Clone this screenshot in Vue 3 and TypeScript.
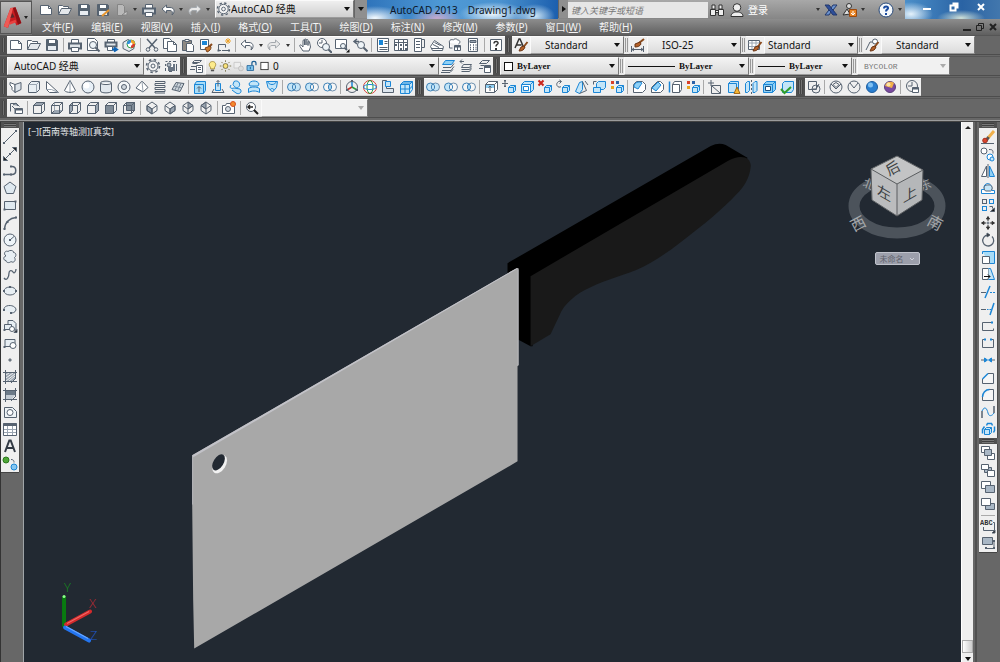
<script setup lang="ts">
import { h, ref } from 'vue'

const D = '#566270'
const B = '#1b86d6'
const L = '#c3e5f8'
const G = '#9aa5b1'

const p = (d: string, fill = 'none', stroke = '', w = 0): string =>
  `<path d="${d}" fill="${fill}"${stroke ? ` stroke="${stroke}"` : ''}${w ? ` stroke-width="${w}"` : ''}/>`
const c = (x: number, y: number, r: number, fill = 'none', stroke = ''): string =>
  `<circle cx="${x}" cy="${y}" r="${r}" fill="${fill}"${stroke ? ` stroke="${stroke}"` : ''}/>`
const dot = (x: number, y: number, fill = D): string =>
  `<rect x="${x - 1}" y="${y - 1}" width="2" height="2" fill="${fill}" stroke="none"/>`

const wire = p('M2.5 5.5h8v8h-8zM2.5 5.5l3-3h8v8l-3 3M10.5 5.5l3-3')
const iso = p('M8 2l5 3.5v5L8 14l-5-3.5v-5zM3 5.5L8 9l5-3.5M8 9v5')
const mini = p('M7.500 8.500l2-2h5v5l-2 2h-5z', L, B) + p('M7.500 8.500h5v5M12.500 8.500l2-2', 'none', B)
const brush = p('M14.500 5l-4 5', 'none', '#8a4a1c', 2) + p('M11 9l-3 1-2 4c3 0 5-1 6-4z', '#b5622a', '#6b3413')
const sheets = p('M5.500 6.500h8l-2 3h-8zM3.500 11.500h8l2-3M3.500 13.500h8l2-3', 'none')
const lens = (x: number, y: number): string => c(x, y, 3.5, '#eef4f8') + p(`M${x + 2.5} ${y + 2.5}l4 4`, 'none', D, 2)
const rings = (a: string, b: string, m: string): string =>
  c(5.5, 8, 4, a, '#3d82b8') + c(10.5, 8, 4, b, '#6d8fae') + p('M8 4.800a4 4 0 0 1 0 6.400a4 4 0 0 1 0-6.400z', m, '#3d82b8')
const colours =
  '<g stroke="none"><rect x="2" y="2" width="3" height="3" fill="#d8402a"/><rect x="7" y="2" width="3" height="3" fill="#2b62a8"/><rect x="2" y="7" width="3" height="3" fill="#e9a51f"/></g>'

const icons: Record<string, string> = {
  new: p('M2.500 3.500h8l3 3v6h-11z', '#fff') + p('M10.500 3.500v3h3'),
  open: p('M1.500 12.500v-9h4l1 1h5v2', '#fff') + p('M1.500 12.500l3-6h10l-3 6z', '#e4e8ec'),
  save: p('M2.500 2.500h10l1 1v10h-11z', '#566370') + p('M5 3h6v3H5z', '#fff', 'none') + p('M4 9h8v4H4z', '#e8edf2', 'none'),
  saveas: p('M2.500 2.500h10l1 1v10h-11z', '#566370') + p('M5 3h6v3H5z', '#fff', 'none') + p('M4 9h8v4H4z', '#e8edf2', 'none') + p('M7 14l7-6', 'none', '#e8962e', 2),
  sheet: p('M3.500 2.500h5l2 2v9h-7z', '#b9b9b9', '#858585') + p('M8 13l5-4v4z', '#ccc', '#858585'),
  print: p('M4.500 6V2.500h7V6', '#fff') + p('M2 6.500h12v5H2z', '#dfe4e8', D, 2) + p('M4.500 10.500h7v4h-7z', '#fff'),
  preview: p('M2.500 1.500h7l3 3v9h-10z', '#fff') + lens(8, 8),
  publish: p('M4.500 5V2.500h7V5', '#fff') + p('M2.500 5.500h11v4h-11z', '#dfe4e8', D, 2) + p('M4.500 9.500h5v4h-5z', '#fff') + p('M9 12.500h4M11 10.500l3 2-3 2', 'none', '#0d62b4', 2),
  globe: p('M2 5.500l5-3 6 3v6l-5 3-6-3z', '#e6eaee') + c(10, 7, 4, '#fff', '#2fa04b') + p('M10 7V3a4 4 0 0 1 4 4z', '#f0a429', 'none') + p('M10 7h4a4 4 0 0 1-4 4z', '#d63b2f', 'none') + p('M10 7H6a4 4 0 0 1 4-4z', '#2f8fe0', 'none') + c(10, 7, 1.500, '#fff', 'none'),
  cut: p('M3 2l8 9M13 2L5 11', 'none', D, 1.500) + c(4, 12.500, 1.800) + c(12, 12.500, 1.800),
  copy: p('M1.500 1.500h6l2 2v8h-8z', '#fff') + p('M5.500 4.500h6l3 3v7h-9z', '#fff') + p('M11.500 4.500v3h3'),
  paste: p('M2.500 3.500h9v10h-9z', '#8f8a84') + p('M5 2.500h4v2H5z', '#fff') + p('M6.500 6.500h5l2 2v6h-7z', '#fff'),
  match: p('M2.500 2.500h8v10h-8z', '#fff') + p('M4 4h5v4H4z', B, 'none') + p('M14 7l-3 3', 'none', '#8a4a1c', 2) + p('M12 9l-5 2 2 4c3-1 4-3 4-5z', '#c87930', '#7c441c'),
  block: p('M5 13.500H2.500v-6h7v3M6 13.500h7') + dot(2.500, 13.500) + dot(13, 13.500) + p('M12 1v6M9 4h6M10 2l4 4M14 2l-4 4', 'none', '#eca32d'),
  undo: p('M6.500 3L2 7l4.500 4V8.500H10c2 0 3 1.500 2 4.500 3-2 3-7.500-2-7.500H6.500z', '#fff'),
  redo: p('M9.500 3L14 7l-4.500 4V8.500H6c-2 0-3 1.500-2 4.500-3-2-3-7.500 2-7.500h3.500z', '#e8e8e8', '#a3a8ad'),
  pan: p('M5 14L2 9.500c-1-2 1-2 2-.5l1 1V4c0-1.500 1.500-1.500 1.500 0V8 3c0-1.500 1.500-1.500 1.500 0v5-4.500c0-1.500 2-1.500 2 0V8.500 5c0-1 1.500-1 1.500 0l1 5-1.500 4z', '#fff'),
  zoomrt: c(6, 6, 4.500, '#fff') + p('M6 3v3H3') + lens(10, 10),
  zoomwin: p('M1.500 2.500h11v9h-11z', '#fff') + c(9, 9, 2.500, '#eef4f8') + p('M11 11l2 2', 'none', D, 2) + p('M12 15.500h3.500V12z', '#111', 'none'),
  zoomprev: p('M7 4.500H3M5 2L2 4.500 5 7', 'none', D, 1.500) + lens(9, 8),
  props: p('M2.500 1.500h11v13h-11z', '#fff') + p('M4 3h4v5H4z', B, 'none') + p('M9.500 4.500h3M9.500 6.500h3M4.500 10.500h8M4.500 12.500h8'),
  dcenter: p('M1.500 2.500h13v11h-13z', '#fff') + p('M5.500 2.500v11M10.500 2.500v11M1.500 5.500h13') + p('M2 7h2v2H2zM7 7h2v2H7zM12 7h2v2h-2zM7 11h2v2H7zM12 11h2v2h-2z', D, 'none'),
  palette: p('M3.500 1.500h7v13h-7z', '#fff') + p('M10.500 2.500h3v8h-3M5 4.500h4M5 7.500h4M5 10.500h4'),
  sheetset: p('M1.500 9.500l4-6 9 6-1 4h-10z', '#fff') + p('M3 11.500h11M4 7.500l6 3M5.500 5.500l6 3'),
  markup: p('M2.500 6c-1-3 2-4 4-3 1-2 4-1 4 0 3 0 3 3 1 4', '#fff') + p('M2.500 6v5h3M7.500 8.500h6v5h-6z', '#fff') + p('M8 9.500h5', 'none', D, 2) + p('M10.500 9v4'),
  calc: p('M3.500 1.500h9v13h-9z', '#fff') + p('M5 3.500h6v2H5z', G) + p('M5 8h1M8 8h1M10.500 8h1M5 10.500h1M8 10.500h1M10.500 10.500h1M5 12.500h1M8 12.500h1M10.500 12.500h1', 'none', D, 1.500),
  help: p('M2.500 2.500h11v11h-11z', '#fff') + p('M6 6.500c0-3 4.500-2.500 4 0-.5 1-2 1-2 3', 'none', '#333', 1.500) + dot(8, 12, '#333'),
  textstyle: p('M2 11L6 2h1l3.500 8M3.500 8h5', 'none', '#333', 1.500) + brush,
  dimstyle: p('M1.500 9v6M13.500 9v6M2 12.500h11M4 11l-2 1.500L4 14M11 11l2 1.500-2 1.500') + p('M14 2L9 6', 'none', '#8a4a1c', 2) + p('M10 5L5 7v3c3 0 5-1 6-3z', '#b5622a', '#6b3413'),
  tablestyle: p('M1.500 3.500h11v9h-11z', '#fff') + p('M1.500 6h11M5 4v8M9 4v8M2 9.500h10', 'none', G) + brush,
  mleader: p('M2 13l4-8h3') + c(11, 4.500, 2.500, '#fff') + brush,
  gear: `<circle cx="8" cy="8" r="6.500" fill="none" stroke-width="1.500" stroke-dasharray="2.500 2.600"/>` + c(8, 8, 5, '#f4f4f4') + c(8, 8, 2),
  wssave: p('M2.500 3.500h2M6 3.500h2M10 3.500h3M2.500 6v2M2.500 10v3M6 13.500h3M13.500 6v7') + p('M5 6h7v7H5z', '#697583', 'none') + p('M7 6h3v3H7z', '#fff', 'none') + c(6, 7, 2, '#aab3bc'),
  layers: p('M6.500 2.500h7l-2 2h-7zM4.500 5.500h5M3 8.500h5M2 11.500h5') + p('M8.500 7.500h6v7h-6z', '#fff') + p('M10 9.500h3M10 11.500h3'),
  bulb: p('M5.500 9.500c-3-3-1-7 2.500-7s5.500 4 2.500 7v2h-5z', '#fdeb8c', '#9c8430') + p('M6 13.500h4', 'none', '#555', 2),
  sun: c(8, 8, 3, '#fbe37a', '#6a6238') + p('M8 1v2M8 13v2M1 8h2M13 8h2M3 3l1.500 1.500M11.500 11.500L13 13M13 3l-1.500 1.500M3 13l1.500-1.500', 'none', '#6a6238'),
  freeze: p('M2.500 3.500h8v7h-8z', '#eee', '#c4c4c4') + c(11, 11, 3, '#ddd', '#bbb'),
  lock: p('M2.500 7.500h8v6h-8z', '#7cc3ee', '#1d5f94') + p('M8.500 7V4.500c0-3 5-3 5 0V7', 'none', '#1d5f94', 1.500) + p('M6.500 9v3', 'none', '#134a78'),
  white: '<rect x="3.500" y="3.500" width="9" height="9" fill="#fff" stroke="#222"/>',
  laycur: p('M5.500 2.500h9l-3 4h-9z', '#8fd0f5', B) + p('M3 9.500h8l3-4M2 12.500h9l3-4M1 14.500h9l3-3'),
  layprev: p('M6 3.500H2M4 1.500l-2 2 2 2') + sheets,
  laystate: p('M6.500 2.500h7l-3 3h-7zM4.500 7.500h4M3 10.500h4') + p('M8.500 7.500h6v7h-6z', '#fff') + p('M8 9h7', 'none', D, 2),
  polysolid: p('M2 3.500l5 2v8l-3-3V8L2 6z', '#fff') + p('M7 5.500l6-2v7l-6 3z', '#dde3e9'),
  box: p('M2.500 5.500l3-3h8v8l-3 3h-8z', '#eaf0f4') + p('M2.500 5.500h8v8M10.500 5.500l3-3', 'none', G),
  wedge: p('M2.500 2.500v8l3 3h9z', '#fff') + p('M2.500 10.500h5l7 3', 'none', G),
  cone: p('M8 1.500l5.500 10c-2 2.500-9 2.500-11 0z', '#fff') + p('M8 2v11', 'none', G),
  sphere: c(8, 8, 6, '#e8f0f7') + c(6.500, 6.500, 3, '#fff', 'none'),
  cylinder: p('M2.500 4c0-2.500 11-2.500 11 0v8c0 2.500-11 2.500-11 0z', '#e2e8ee') + p('M2.500 4c0 2 11 2 11 0', '#fff'),
  torus: c(8, 8, 6, '#f4f7f9') + c(8, 8, 2.500, '#cfd7de'),
  pyramid: p('M8 2l6 6.500-5 4.500-7-4z', '#fff') + p('M8 2l1 11', 'none', G),
  helix: p('M3 2.500h10v2H3v2h10v2H3v2h10v2H3v1.500h10'),
  planar: p('M6 3.500l8 1-4 8-8-2z', '#cdd5dc') + p('M4 7l8 2M8 4l-3 7M11 4.500L7.500 12', 'none', '#7a8794'),
  extrude: p('M2.500 5.500l2-3h9v9l-2 3h-9z', '#a7dcf8', B) + p('M2.500 5.500h9v9', 'none', B) + p('M7 13V8M5 9.500L7 7.500l2 2'),
  presspull: p('M5.500 4.500h5v7h-5z', L, B) + p('M2 13.500h12M4 10l-2 3.500M12 10l2 3.500M8 1.500v6M6.500 3L8 1.500 9.500 3'),
  sweep: p('M6 2.500c4-2 7 2 5 5s-5 0-6-2z', L, B) + p('M3 6c-2 3 0 4 3 3l6 1c3 3-1 6-4 4L4 11', L, B),
  revolve: p('M3 5c1-4 9-4 10 0l-1 2H4z', L, B) + p('M2.500 9.500c3-2 8-2 11 0v4c-3-2-8-2-11 0z', L, B),
  loft: p('M2.500 2.500h11l-1 6-4 4.500L4 8.500z', L, B) + p('M4 2.500c0 4 8 4 8 0M6 11c1-2 3-2 4 0', 'none', B),
  union: rings(L, L, L),
  subtract: rings(L, '#f6f6f6', '#f6f6f6'),
  intersect: rings('#f6f6f6', '#f6f6f6', '#9bd5f5'),
  move3: p('M8 8V2', 'none', B, 1.500) + p('M8 8l-5 3', 'none', '#c3312a', 1.500) + p('M8 8l5 3', 'none', '#2b9b3d', 1.500) + c(8, 8, 5.500) + dot(8, 2) + dot(3, 11) + dot(13, 11),
  rotate3: c(8, 8, 6.500, '#fff', '#d23b30') + `<ellipse cx="8" cy="8" rx="3" ry="6.500" stroke="#2b9b3d"/><ellipse cx="8" cy="8" rx="6.500" ry="2.500" stroke="${B}"/>`,
  align3: p('M2.500 1.500v12h11v-4h-7v-8z', '#dde6ee') + p('M5.500 2.500h5v5h-5z', L, B),
  array3: p('M2.500 5.500l3-3h9v8l-3 4h-9z', L, B) + p('M2.500 5.500h9v9M11.500 5.500l3-3M7 5.500v9M2.500 10h9l3-3M4 4h9', 'none', B),
  faceext: p('M2.500 5.500l3-3h9v8l-3 3h-9z', '#fff') + p('M3 6h8v3H3z', '#8fd0f5', 'none') + p('M2.500 5.500h9v8M11.500 5.500l3-3M7 12V7M5.500 8.500L7 7l1.500 1.500'),
  facemove: p('M4 1.500v6M1 4.500h6M4 1l-1 1h2zM4 8L3 7h2z') + mini,
  faceoff: p('M2.500 5.500l3-3h9v8l-3 3h-9z', L, B) + p('M4.500 7.500h5v4h-5zM2.500 5.500h9v8M11.500 5.500l3-3', '#fff', B),
  facedel: p('M1.500 1.500l5 5M6.500 1.500l-5 5', 'none', '#c9261c', 2) + mini,
  facerot: p('M6 2.500c-3-1-5 2-4 4s3 2 4 1M4.500 1l2 1.500-2 2') + mini,
  facetap: p('M2.500 12.500l4-9 3-1v8l-3 4z', L, B) + p('M9.500 2.500l4 9-7 3M12 2l3 4'),
  facecopy: p('M5.500 4.500l2-2h7v6l-2 2h-7z', L, B) + p('M2.500 8.500h7v5h-7z', L, B) + p('M2.500 5.500v-3h3'),
  facecol: colours + mini,
  fillet: p('M2.500 5.500l3-3h6l3 3v5l-3 3h-9z', '#fff') + p('M3 8c0-5 5-6 8-4l-4 6z', '#8fd0f5', B),
  chamfer: p('M2.500 8.500l6-6h3l3 3v5l-3 3h-9z', '#fff') + p('M3 9l6-6 3 3-5 6z', '#8fd0f5', B),
  edgecopy: p('M5.500 5.500l2-3h7v8l-2 3h-7z', '#fff') + p('M2.500 2.500v11', 'none', B, 1.500) + p('M5.500 5.500h7v8'),
  imprint: p('M4 1v6M1 4h6M4.500 6.500h9v8h-9zM5 7l8 7'),
  clean: p('M3.500 4.500l2-2h8v8l-2 3h-8z', L, B) + p('M3.500 4.500h8v9', 'none', B) + p('M12 8l3 6.500H9z', '#f6b733', '#a3691a'),
  separate: p('M2.500 4.500l2-2h2v9l-2 2h-2zM10 4.500l2-2h2v9l-2 2h-2z', L, B) + p('M8.500 1v2M8.500 5v2M8.500 9v2M8.500 13v2'),
  shell: p('M2.500 5.500l3-3h9v8l-3 3h-9z', '#8fd0f5', B) + p('M2.500 5.500h9v8M11.500 5.500l3-3', 'none', B) + p('M4.500 7.500h5v4h-5z', '#fff', '#1d4f7b'),
  check: p('M3.500 4.500l2-2h9v8l-2 3h-9z', L, B) + p('M2 10l3.500 4L12 8', 'none', '#2f9e2c', 2),
  vs2d: p('M2.500 2.500h8v8h-8z') + c(10, 10, 4) + p('M6 10h4l3-5'),
  vswire: c(8, 8, 6) + p('M3 5l5 5 5-5M5 5.500l3-2 3 2-3 3z'),
  vshide: c(8, 8, 6) + p('M4 4l4 5 4-5'),
  vsreal: c(8, 8, 5.500, '#2a7fd0', '#1c5c9e') + c(6.500, 6, 2.500, '#7fc0f2', 'none'),
  vsconc: c(8, 8, 5.500, '#7a4aa0', '#5a3f7a') + p('M3 7a5.500 5.500 0 0 1 9-3l-2 5z', '#f2b14a', 'none') + c(6.500, 5.500, 2, '#fbe3a8', 'none'),
  vsman: c(8, 7, 5.500) + p('M8 3v4h-4') + p('M8.500 8.500h6v5h-6z', '#fff') + p('M8.500 9.500h6', 'none', D, 2),
  viewmgr: p('M2.500 11.500v-8h6l3 3M4 6l3 3v5') + p('M7.500 8.500h7v5h-7z', '#fff') + p('M7.500 9.500h7', 'none', D, 2) + p('M5 5l3-2 2 3', G),
  vtop: p('M2.500 5.500l3-3h8l-3 3z', G) + wire,
  vbottom: p('M2.500 13.500l3-3h8l-3 3z', G) + p('M5.500 2.500v8M5.500 10.500h8', 'none', G) + wire,
  vleft: p('M2.500 5.500l3-3v8l-3 3z', G) + wire,
  vright: p('M10.500 5.500l3-3v8l-3 3z', G) + wire,
  vfront: p('M2.500 5.500h8v8h-8z', '#7f8b97') + wire,
  vback: p('M5.500 2.500h8v8h-8z', '#7f8b97') + wire,
  vsw: p('M3 5.500L8 9v5l-5-3.500z', G) + iso,
  vse: p('M13 5.500L8 9v5l5-3.500z', G) + iso,
  vne: p('M8 2l5 3.500L8 9z', G) + iso,
  vnw: p('M8 2L3 5.500 8 9z', G) + iso,
  camera: p('M1.500 5.500h3l1-2h4l1 2h3v8h-12z', '#fff') + c(7, 9, 2.500, '#d5dce2') + c(12, 4, 2.500, '#f08a2c', '#d9501e'),
  camadj: c(7, 7, 4.500, '#fff') + p('M4 7h5M6 5L4 7l2 2', 'none', '#222', 1.500) + p('M10 10l4 4', 'none', '#222', 2),
  line: p('M2 14L14 2') + dot(2, 14) + dot(14, 2),
  xline: p('M2 14L14 2') + dot(8, 8) + p('M1.500 14.500v-4l4 4zM14.500 1.500v4l-4-4z', '#222'),
  pline: p('M2 11.500h8c5 0 5-8 0-8', 'none', D, 1.500) + dot(2, 11.500) + dot(9, 11.500) + dot(9, 3.500),
  polygon: p('M8 2l6 4.500-2.500 7h-7L2 6.500z', '#dfe9f0'),
  rect: p('M2.500 4.500h11v8h-11z', '#dfe9f0') + dot(2.500, 12.500) + dot(13.500, 4.500),
  arc: p('M2.500 14C3 7 8 3 14 2.500', 'none', D, 1.500) + dot(2.500, 14) + dot(5.500, 7) + dot(14, 2.500),
  circle: c(8, 8, 6, '#eef4f8') + p('M8 8l4-3.500') + dot(8, 8),
  cloud: p('M4 7c-3-2-1-6 2-4.500 2-2 6-1 5.500 1 3 0 3 4 1 5 2 3-1 6-3.500 4-2 2-5 1-5-1-3 0-3-4 0-4.500z', '#e7eef3'),
  spline: p('M2 12c3 4 5-2 5-5s3-3 4-1 3 0 3-3', 'none', D, 1.300),
  ellipse: `<ellipse cx="8" cy="8" rx="6" ry="4" fill="#e7eef3"/>` + dot(2, 8) + dot(8, 4) + dot(14, 8),
  ellarc: p('M2 9c-1-6 12-6 12 0-1 3-4 3-5 3', '#e7eef3') + dot(2, 9) + dot(9, 12),
  insert: p('M6 7V2.500h5l3 3V12h-2M2.500 6.500h7v5h-7z', '#e7eef3') + c(10, 11, 2.500, '#fff') + dot(2.500, 12) + p('M12 14.500h3v-3z', '#111'),
  make: p('M3 11.500v-7h10v4M2 11.500h6', '#e7eef3') + c(11, 10.500, 3, '#fff') + dot(2.500, 12),
  point: p('M7 7h2v2H7z', '#6c7680', '#6c7680'),
  hatch: p('M3 3.500h11M3 12.500h8M3.500 1v14M13.500 1v8') + `<path d="M4 4h9v6l-3 2H4z" fill="${G}" stroke="none"/><path d="M4 6l3-2M4 9l7-5M4 12l9-7M7 12l6-5" stroke="#eee"/>` + p('M1 3.500h14M1 12.500h14M9 14l5-5'),
  gradient: p('M1 3.500h14M1 12.500h14M3.500 1v14M13.500 1v8') + p('M4 4h9v4H4z', '#6c7a88', 'none') + p('M4 8h9l-3 4H4z', '#c2cad2', 'none') + p('M9 14l5-5'),
  region: p('M2.500 3.500h8l4 4v6h-12z', '#eef3f6') + c(8, 8.500, 3, '#fff'),
  table: p('M1.500 2.500h13v12h-13z', '#fff') + p('M1.500 3.500h13', 'none', D, 3) + p('M5.500 5v9M10.500 5v9M2 8.500h12M2 11.500h12', 'none', G),
  mtext: p('M3 14L7.300 2.500h1.400L13 14M4.500 10h7', 'none', '#333b45', 2),
  addsel: c(4, 5, 3, '#4fa637', '#2b7a1c') + c(12, 12, 3, '#86c6f0', B) + p('M9 4.500c3 0 3 2 3 3'),
  erase: p('M14 2L8 9', 'none', '#f0b04a', 3) + p('M8.500 8L6 12', 'none', '#555', 3) + c(5, 11.500, 2.300, '#d9442c', '#a5301d') + p('M1 14.500h13'),
  ecopy: c(4, 5, 3, '#fff') + c(10, 11, 3, '#fff', B) + c(12, 13, 2, L, B) + p('M9 3.500c4 0 4 1 4 4'),
  mirror: p('M6.500 3v10.500H1.500z', '#fff') + p('M9.500 3v10.500h5z', '#8fd0f5', B) + p('M8 1v14'),
  offset: p('M1.500 13.500h13v-3h-3c2-10-10-8-7-1h-3z', '#fff', B) + p('M5.500 11h5c3-2 2-7-3-6-4 0-4 4-2 6z', L, D),
  array: '<rect x="2.500" y="2.500" width="4" height="4"/><g stroke="#1b86d6"><rect x="9.500" y="2.500" width="4" height="4"/><rect x="2.500" y="9.500" width="4" height="4"/></g>' + p('M9.500 9.500h3v2', 'none') + p('M14.500 11v3.500h-4z', '#111'),
  move: p('M8 2v4M8 10v4M2 8h4M10 8h4', 'none', '#333') + p('M6.500 4L8 1.500 9.500 4zM6.500 12L8 14.500 9.500 12zM4 6.500L1.500 8 4 9.500zM12 6.500L14.500 8 12 9.500z', '#333', '#333') + c(8, 8, 1),
  rotate: p('M8 3a5.500 5.500 0 1 0 4 1.500', 'none', D, 1.300) + p('M7 1v4l3-2z', '#222'),
  scale: p('M2.500 2.500h12v12h-5', '#a7dcf8', B) + p('M2.500 7.500h7v7h-7z', '#fff') + p('M2.500 5V2.500', 'none', B),
  stretch: p('M2.500 2.500h6v11h-6z', '#fff') + p('M8.500 2.500h2l4 11h-6', L, B) + p('M4 10.500h6M8 8.500l2 2-2 2', 'none', '#111'),
  trim: p('M1 8.500h5') + p('M10 8.500h2M13 8.500h2', 'none', B) + p('M5 14l5-12', 'none', B, 1.500),
  extend: p('M1 8.500h5') + p('M7 8.500h1.500M9.500 8.500H11', 'none', B) + p('M10 14l4-12', 'none', B, 1.500),
  breakpt: p('M13 4.500H2.500v8h11v-2') + dot(12, 4.500, B),
  brk: p('M5 4.500H2.500v8h11v-8H11') + dot(5, 4.500, B) + dot(11, 4.500, B),
  join: p('M1 8h4M11 8h4') + p('M4.500 6v4l3-2zM11.500 6v4l-3-2z', B, B),
  echam: p('M8 3.500h5.500v10h-11V9', '#f6f6f6') + p('M2.500 9L8 3.500', 'none', B, 1.500),
  efill: p('M9 2.500h4.500v11h-11V10', '#f6f6f6') + p('M2.500 10c0-4 3-7.500 7-7.500', 'none', B, 1.500),
  blend: p('M2 14V7M14 9V2', 'none', D, 1.500) + p('M2 7c3-6 5-2 6 2s4 3 6 0', 'none', B),
  explode: p('M4.500 8.500l2-2h5v5l-2 2h-5z', L, B) + p('M4.500 8.500h5v5M9.500 8.500l2-2', 'none', B) + p('M2.500 12.500v-4l2-3M6.500 4.500l1-2h4l1 2M14.500 5.500v4l-1 2', 'none', B, 1.500),
  front: p('M1.500 1.500h8v6h-8zM7.500 8.500h7v6h-7z', '#fff') + p('M4.500 4.500h7v6h-7z', '#a9b7c5'),
  back: p('M4.500 5.500h7v5h-7z', '#a9b7c5') + p('M1.500 2.500h7v5h-7zM7.500 8.500h7v6h-7z', '#fff'),
  above: p('M1.500 2.500h9v7h-9z', '#fff') + p('M5.500 6.500h9v7h-9z', '#a9b7c5'),
  under: p('M5.500 7.500h9v6h-9z', '#a9b7c5') + p('M1.500 2.500h9v7h-9z', '#fff'),
  abc: '<text x="0" y="7" font-size="7" font-weight="700" font-family="Liberation Mono" fill="#333" stroke="none">ABC</text>' + p('M13 4.500h1.500v8h-11V9') + p('M12 15h3v-3z', '#111'),
  hatchback: p('M2.500 2.500h10v7h-10z', '#a9b7c5') + p('M6 13.500h7M14 6v6') + dot(6, 13) + dot(14, 13) + dot(14, 6),
  find: p('M3 3h3v4H3zM10 3h3v4h-3zM1.500 7.500h5v6h-5zM9.500 7.500h5v6h-5zM6.500 8.500h3v2h-3z', '#eee', '#333'),
  user: c(8, 5.500, 3.800, '#eee', '#333') + p('M2 14.500c0-4 4-4 4-4.500h4c0 .5 4 .5 4 4.500z', '#eee', '#333'),
  exchange: p('M2 3h4l8 10h-4z', '#2e4f9a', '#22386d') + p('M14 3h-4L8 6l2 2zM2 13h4l2-3-2-2z', '#6c93cf', '#22386d'),
  cloudapp: p('M2 13l4-6 3 5z', '#ddd', '#333') + c(8, 4, 2.500, '#ddd', '#333') + p('M8.500 7.500h7v7h-7z', '#e98423', '#9b4a10') + p('M12 9v4M10 11l2 2 2-2', 'none', '#fff'),
  qhelp: c(8, 8, 7, '#f5f8fb', '#27497a') + p('M6 6.500c0-3 4.500-2.500 4 0-.5 1-2 1-2 3', 'none', '#1a4ba0', 2) + dot(8, 12, '#1a4ba0'),
}

const Icon = (props: { name: string }) =>
  h('svg', { class: 'icon', viewBox: '0 0 16 16', 'aria-hidden': 'true', innerHTML: icons[props.name] ?? '' })
Icon.props = ['name']

const list = (s: string): string[] => s.split(' ')
const quick = list('new open save saveas sheet v print undo v redo v')
const standard = list('new open save | print preview publish globe | cut copy paste match block | undo v redo v | pan zoomrt zoomwin zoomprev | props dcenter palette sheetset markup calc | help')
const modeling = list('polysolid box wedge cone sphere cylinder torus pyramid helix planar | extrude presspull sweep revolve loft | union subtract intersect | move3 rotate3 align3 array3')
const solids = list('union subtract intersect | faceext facemove faceoff facedel facerot facetap facecopy facecol | fillet chamfer edgecopy facecol | imprint clean separate shell check')
const visual = list('vs2d | vswire vshide vsreal vsconc | vsman')
const views = list('viewmgr | vtop vbottom vleft vright vfront vback | vsw vse vne vnw | camera | camadj')
const draw = list('line xline pline polygon rect arc circle cloud spline ellipse ellarc insert make point hatch gradient region table mtext addsel')
const modify = list('erase ecopy mirror offset array move rotate scale stretch trim extend breakpt brk join echam efill blend explode')
const order = list('front back above under | abc hatchback')

const menus: [string, string][] = [
  ['文件', 'F'], ['编辑', 'E'], ['视图', 'V'], ['插入', 'I'], ['格式', 'O'], ['工具', 'T'],
  ['绘图', 'D'], ['标注', 'N'], ['修改', 'M'], ['参数', 'P'], ['窗口', 'W'], ['帮助', 'H'],
]
const styles = [
  { icon: 'dimstyle', label: '标注样式', value: 'ISO-25', cls: 'in14' },
  { icon: 'tablestyle', label: '表格样式', value: 'Standard', cls: 'in4' },
  { icon: 'mleader', label: '多重引线样式', value: 'Standard', cls: 'in14' },
]
const query = ref('')
</script>

<template>
  <div class="app">
    <header class="header">
      <button class="logo" type="button" aria-label="应用程序菜单">
        <svg class="logo-mark" viewBox="0 0 24 28" aria-hidden="true">
          <path d="M1 24L9 2l6-1 7 19-6 3-2-5-6 2-2 6z" fill="#c81e22" />
          <path d="M1 24L9 2l3 0-6 24z" fill="#ef5a55" />
          <path d="M12 2l3-1 7 19-4 2z" fill="#8e0f14" />
          <path d="M9 14l2-6 3 5z" fill="#5b2a2c" />
          <path d="M7 19l8-3 1 3-8 3z" fill="#e8403f" />
        </svg>
        <i class="tri"></i>
      </button>
      <div class="title-row">
        <div class="quick">
          <template v-for="(n, i) in quick" :key="i">
            <button v-if="n === 'v'" class="drop" type="button" aria-label="更多"><i class="tri"></i></button>
            <button v-else class="tool" type="button" :aria-label="n"><Icon :name="n" /></button>
          </template>
        </div>
        <div class="combo ws-top">
          <Icon name="gear" />
          <select aria-label="工作空间"><option>AutoCAD 经典</option></select>
          <i class="tri"></i>
        </div>
        <button class="more" type="button" aria-label="自定义快速访问工具栏"><i class="tri"></i></button>
        <div class="caption"><span>AutoCAD 2013</span><span>Drawing1.dwg</span></div>
        <button class="expand" type="button" aria-label="展开"><i class="tri-right"></i></button>
        <input v-model="query" class="search" type="text" aria-label="搜索" placeholder="键入关键字或短语" />
        <div class="info">
          <button class="tool" type="button" aria-label="搜索"><Icon name="find" /></button>
          <button class="login" type="button"><Icon name="user" /><span>登录</span></button>
          <button class="drop push" type="button" aria-label="登录选项"><i class="tri"></i></button>
          <button class="tool" type="button" aria-label="Exchange"><Icon name="exchange" /></button>
          <button class="tool" type="button" aria-label="保持连接"><Icon name="cloudapp" /></button>
          <button class="drop" type="button" aria-label="连接选项"><i class="tri"></i></button>
          <button class="tool gap" type="button" aria-label="帮助"><Icon name="qhelp" /></button>
          <button class="drop" type="button" aria-label="帮助选项"><i class="tri"></i></button>
        </div>
        <div class="window">
          <button type="button" aria-label="最小化"><svg viewBox="0 0 10 10"><path d="M1 6h8v2H1z" fill="#fff" /></svg></button>
          <button type="button" aria-label="还原"><svg viewBox="0 0 10 10"><path d="M3.500 1.500h5v5M1.500 3.500h5v5h-5z" fill="none" stroke="#fff" stroke-width="2" /></svg></button>
          <button type="button" aria-label="关闭"><svg viewBox="0 0 10 10"><path d="M2 2l6 6M8 2L2 8" stroke="#fff" stroke-width="2" /></svg></button>
        </div>
      </div>
      <div class="menu-row">
        <nav class="menus">
          <button v-for="m in menus" :key="m[1]" type="button">{{ m[0] }}(<u>{{ m[1] }}</u>)</button>
        </nav>
        <div class="doc-window">
          <button type="button" aria-label="最小化图形"><svg viewBox="0 0 10 10"><path d="M1 8h8" stroke="#222" stroke-width="2" /></svg></button>
          <button type="button" aria-label="还原图形"><svg viewBox="0 0 10 10"><path d="M3.500 3V1.500h5v5H7M1.500 3.500h5v5h-5z" fill="none" stroke="#222" /></svg></button>
          <button type="button" aria-label="关闭图形"><svg viewBox="0 0 10 10"><path d="M2 2l6 6M8 2L2 8" stroke="#222" stroke-width="2" /></svg></button>
        </div>
      </div>
    </header>

    <section class="bars">
      <div class="bar">
        <i class="grip"></i>
        <div class="strip">
          <template v-for="(n, i) in standard" :key="i">
            <i v-if="n === '|'" class="sep"></i>
            <button v-else-if="n === 'v'" class="drop" type="button" aria-label="更多"><i class="tri"></i></button>
            <button v-else class="tool" type="button" :aria-label="n"><Icon :name="n" /></button>
          </template>
        </div>
        <i class="grip"></i>
        <div class="strip"><button class="tool" type="button" aria-label="文字样式"><Icon name="textstyle" /></button></div>
        <div class="combo style-box in14"><select aria-label="文字样式"><option>Standard</option></select><i class="tri"></i></div>
        <template v-for="s in styles" :key="s.label">
          <i class="grip light"></i>
          <div class="strip"><button class="tool" type="button" :aria-label="s.label"><Icon :name="s.icon" /></button></div>
          <div class="combo style-box" :class="s.cls"><select :aria-label="s.label"><option>{{ s.value }}</option></select><i class="tri"></i></div>
        </template>
      </div>

      <div class="bar">
        <i class="grip"></i>
        <div class="combo ws-box"><select aria-label="工作空间设置"><option>AutoCAD 经典</option></select><i class="tri"></i></div>
        <div class="strip">
          <button class="tool" type="button" aria-label="工作空间设置"><Icon name="gear" /></button>
          <button class="tool" type="button" aria-label="保存工作空间"><Icon name="wssave" /></button>
        </div>
        <i class="grip"></i>
        <div class="strip"><button class="tool" type="button" aria-label="图层特性"><Icon name="layers" /></button></div>
        <div class="combo layer-box">
          <Icon name="bulb" /><Icon name="sun" /><Icon name="freeze" /><Icon name="lock" /><Icon name="white" />
          <select aria-label="图层"><option>0</option></select><i class="tri"></i>
        </div>
        <div class="strip">
          <button class="tool" type="button" aria-label="置为当前"><Icon name="laycur" /></button>
          <button class="tool" type="button" aria-label="上一个图层"><Icon name="layprev" /></button>
          <button class="tool" type="button" aria-label="图层状态"><Icon name="laystate" /></button>
        </div>
        <i class="grip"></i>
        <div class="combo by color-box"><i class="swatch"></i><select aria-label="颜色"><option>ByLayer</option></select><i class="tri"></i></div>
        <i class="grip light"></i>
        <div class="combo by type-box"><i class="rule"></i><select aria-label="线型"><option>ByLayer</option></select><i class="tri"></i></div>
        <i class="grip light"></i>
        <div class="combo by weight-box"><i class="rule"></i><select aria-label="线宽"><option>ByLayer</option></select><i class="tri"></i></div>
        <i class="grip light"></i>
        <div class="combo by plot-box off"><select aria-label="打印样式" disabled><option>BYCOLOR</option></select><i class="tri"></i></div>
      </div>

      <div class="bar tight">
        <template v-for="(group, g) in [modeling, solids, visual]" :key="g">
          <i class="grip" :class="{ wide: g > 0 }"></i>
          <div class="strip">
            <template v-for="(n, i) in group" :key="i">
              <i v-if="n === '|'" class="sep"></i>
              <button v-else class="tool" type="button" :aria-label="n"><Icon :name="n" /></button>
            </template>
          </div>
        </template>
      </div>

      <div class="bar">
        <i class="grip"></i>
        <div class="strip">
          <template v-for="(n, i) in views" :key="i">
            <i v-if="n === '|'" class="sep"></i>
            <button v-else class="tool" type="button" :aria-label="n"><Icon :name="n" /></button>
          </template>
        </div>
        <div class="combo view-box off"><select aria-label="命名视图"><option></option></select><i class="tri"></i></div>
      </div>
    </section>

    <main class="work">
      <aside class="side left">
        <i class="side-grip"></i>
        <div class="stack draw-stack">
          <button v-for="n in draw" :key="n" class="tool" type="button" :aria-label="n"><Icon :name="n" /></button>
        </div>
      </aside>

      <section class="viewport">
        <svg class="scene" viewBox="24 122 936 540" preserveAspectRatio="xMinYMin slice" aria-label="菜刀模型">
          <path d="M507 263L710 146q8-4 15-1l22 13-10 8L532 280v66h-2l-13-7v-70l-10 6z" fill="#000" />
          <path d="M530 276L727 161C739 154 750 156 750 166C749 179 742 188 736 194C722 209 704 224 680 242C667 252 652 263 635 270C619 276 604 280 590 287C576 293 563 304 559 315L550 334L530 346z" fill="#191919" />
          <path d="M192 455L516 268h2v97l-1 1v95L194 648l-1-48-1-96z" fill="#a8a8a8" />
          <path d="M192 455L516 268h2L193 457z" fill="#c2c2c8" />
          <path d="M192.500 455v49M517.500 269v96" stroke="#b8b8bd" fill="none" />
          <g transform="rotate(32 220 463)">
            <ellipse cx="220" cy="464" rx="6" ry="10" fill="#f2f2f2" />
            <ellipse cx="218" cy="463" rx="5" ry="9" fill="#222932" />
          </g>
          <g stroke-width="4" stroke-linecap="round" fill="none">
            <path d="M64 625v-28" stroke="#087a10" />
            <path d="M66 624l24-13" stroke="#d42a2c" />
            <path d="M65 627l24 13" stroke="#2475f0" />
          </g>
          <path d="M67 623l22-12" stroke="#f26a66" />
          <path d="M66 626l22 12" stroke="#6aa8ff" />
          <circle cx="64" cy="596" r="1.500" fill="#8dfc8d" />
          <g class="axis">
            <text x="64" y="592" fill="#15901c">Y</text>
            <text x="89" y="607" fill="#c02a33">X</text>
            <text x="90" y="639" fill="#1f58c8">Z</text>
          </g>
        </svg>
        <button class="view-label" type="button">[−][西南等轴测][真实]</button>
        <div class="navigator">
          <svg class="cube" viewBox="845 150 104 92" aria-label="ViewCube">
            <ellipse cx="897" cy="206" rx="43" ry="27" fill="none" stroke="#4c535b" stroke-width="11" />
            <g class="compass">
              <text transform="translate(854 232) rotate(-28)">西</text>
              <text transform="translate(926 224) rotate(28)">南</text>
              <text class="far" transform="translate(862 186) rotate(20)">北</text>
              <text class="far" transform="translate(921 191) rotate(-20)">东</text>
            </g>
            <path d="M897 156l26 14-1 30-25 16-25-16-1-31z" fill="#b5b7b9" />
            <path d="M897 156l26 14-26 14-26-15z" fill="#c3c4c5" />
            <path d="M871 169l26 15v32l-25-16z" fill="#bbbcbe" />
            <path d="M897 156l26 14-1 30-25 16-25-16-1-31zM871 169l26 15 26-14M897 184v32" fill="none" stroke="#5a5d60" />
            <g class="face">
              <text transform="translate(889 176) rotate(-28)">后</text>
              <text transform="translate(877 194) skewY(30)">左</text>
              <text transform="translate(903 203) skewY(-30)">上</text>
            </g>
          </svg>
          <button class="ucs" type="button"><span>未命名</span><svg viewBox="0 0 6 6"><path d="M1 2l2 2 2-2" fill="none" stroke="#d0d2da" /></svg></button>
        </div>
      </section>

      <div class="scroll" aria-hidden="true">
        <i class="tri-up"></i>
        <i class="thumb"></i>
        <i class="tri"></i>
      </div>

      <aside class="side right">
        <i class="side-grip"></i>
        <div class="stack modify-stack">
          <button v-for="n in modify" :key="n" class="tool" type="button" :aria-label="n"><Icon :name="n" /></button>
        </div>
        <i class="side-grip"></i>
        <div class="stack order-stack">
          <template v-for="n in order" :key="n">
            <i v-if="n === '|'" class="hsep"></i>
            <button v-else class="tool" type="button" :aria-label="n"><Icon :name="n" /></button>
          </template>
        </div>
      </aside>
    </main>
  </div>
</template>

<style>
body {
  margin: 0;
  overflow: hidden;
}
</style>

<style scoped>
.app {
  display: flex;
  flex-direction: column;
  height: 100vh;
  overflow: hidden;
  background: #676767;
  font-family: "Noto Sans", "Noto Sans CJK SC", sans-serif;
  font-size: 10px;
  color: #111;
}
.app button,
.app select,
.app input {
  margin: 0;
  padding: 0;
  border: 0;
  border-radius: 0;
  background: none;
  color: inherit;
  font: inherit;
  outline: 0;
}
.icon {
  display: block;
  flex: none;
  width: 16px;
  height: 16px;
  fill: none;
  stroke: #566270;
  stroke-width: 1;
}
.tri,
.tri-right,
.tri-up {
  display: block;
  flex: none;
  border: 3px solid transparent;
  border-top: 4px solid #111;
  border-bottom: 0;
}
.tri-right {
  border: 3px solid transparent;
  border-left: 4px solid #111;
  border-right: 0;
}
.tri-up {
  border: 3px solid transparent;
  border-bottom: 3px solid #222;
  border-top: 0;
}
.app .tool {
  display: flex;
  flex: none;
  align-items: center;
  justify-content: center;
  width: 18px;
  height: 100%;
}
.app .drop {
  display: flex;
  flex: none;
  align-items: center;
  justify-content: center;
  width: 9px;
  height: 100%;
}
.drop .tri {
  border-width: 2px;
  border-top: 3px solid #333;
  border-bottom: 0;
}

/* title and menus */
.header {
  display: grid;
  flex: none;
  grid-template: 19px 16px / 32px 1fr;
  background: #767676;
}
.app .logo {
  display: flex;
  grid-row: 1 / 3;
  align-items: center;
  gap: 1px;
  padding: 0 2px;
  margin: 1px 0;
  border: 1px solid #555;
  background: linear-gradient(#bcbcbc, #858585);
}
.logo-mark {
  width: 20px;
  height: 26px;
}
.logo .tri {
  border-width: 2px;
  border-top: 3px solid #222;
  border-bottom: 0;
}
.title-row {
  display: flex;
  min-width: 0;
  background: linear-gradient(#a8a8a8, #868686);
}
.quick {
  display: flex;
  flex: none;
  width: 179px;
  padding-left: 4px;
}
.app .quick .tool {
  width: 19px;
}
.quick .drop {
  width: 8px;
}
.app .ws-top {
  flex: none;
  width: 139px;
  height: 18px;
  background: linear-gradient(#efefef, #cfcfcf);
}
.ws-top .icon {
  width: 15px;
}
.app .more,
.app .expand {
  display: flex;
  flex: none;
  align-items: center;
  justify-content: center;
  width: 13px;
  height: 18px;
  border-left: 1px solid #666;
  background: #8f8f8f;
}
.app .expand {
  width: 10px;
}
.caption {
  display: flex;
  flex: 1;
  align-items: center;
  gap: 10px;
  padding-left: 23px;
  overflow: hidden;
  white-space: nowrap;
  color: #0d1626;
  background:
    radial-gradient(ellipse 30px 12px at 8px 18px, #f5fbff, transparent),
    radial-gradient(ellipse 34px 12px at 126px 14px, #eaf4fb, transparent),
    radial-gradient(ellipse 26px 10px at 70px 18px, #c6a9cd, transparent),
    radial-gradient(ellipse 20px 12px at 168px 16px, #cfe6f5, transparent),
    linear-gradient(90deg, #2f74bb, #4f9ad6 40%, #4a92cf 70%, #1c5fae);
}
.app .search {
  flex: none;
  width: 140px;
  height: 16px;
  margin-top: 2px;
  padding-left: 3px;
  box-sizing: border-box;
  background: #e6e6e6;
  font-size: 9px;
}
.search::placeholder {
  color: #777;
  font-style: italic;
  opacity: 1;
}
.info {
  display: flex;
  flex: none;
  align-items: center;
  width: 197px;
}
.app .login {
  display: flex;
  align-items: center;
  gap: 3px;
  padding-left: 3px;
  color: #fff;
}
.info .push {
  margin-left: auto;
}
.info .gap {
  margin-left: 10px;
}
.info .drop:last-child {
  margin-right: 1px;
}
.window {
  display: flex;
  flex: none;
  justify-content: space-between;
  width: 95px;
  padding: 0 14px 0 17px;
  box-sizing: border-box;
  background:
    radial-gradient(ellipse 22px 12px at 6px 14px, #e4f1fa, transparent),
    radial-gradient(ellipse 24px 8px at 56px 18px, #cfe0d8, transparent),
    linear-gradient(90deg, #4b8fc9, #2a63a4 60%, #4277ad);
}
.window svg,
.doc-window svg {
  display: block;
  width: 10px;
  height: 10px;
}
.window button {
  height: 14px;
}
.menu-row {
  display: flex;
  justify-content: space-between;
  min-width: 0;
  background: linear-gradient(#8d8d8d, #5f5f5f);
}
.menus {
  display: flex;
  align-items: center;
  gap: 18px;
  padding-left: 10px;
  color: #f4f4f4;
  white-space: nowrap;
}
.menus button {
  line-height: 14px;
}
.menus u {
  text-underline-offset: 1px;
}
.doc-window {
  display: flex;
  align-items: center;
  gap: 3px;
  padding-right: 2px;
}

/* horizontal toolbars */
.bars {
  display: flex;
  flex: none;
  flex-direction: column;
  gap: 3px;
  padding: 1px 0 3px;
  background: #676767;
  border-bottom: 1px solid #9c9c9c;
}
.bar {
  display: flex;
  height: 18px;
  box-shadow: 0 -1px 0 #565656, 0 1px 0 #4d4d4d;
}
.strip {
  display: flex;
  flex: none;
  align-items: stretch;
  background: #efefef;
  box-shadow: inset 0 1px 0 #fff, inset 0 -1px 0 #d4d4d4;
}
.sep {
  flex: none;
  width: 1px;
  margin: 2px;
  background: #a9a9a9;
}
.tight .sep {
  margin: 2px 2px 2px 1px;
}
.grip {
  flex: none;
  width: 7px;
  box-sizing: border-box;
  border: solid #505050;
  border-width: 2px;
  background: repeating-linear-gradient(90deg, #444 0 1px, #727272 1px 2px);
}
.grip.wide {
  width: 9px;
}
.grip.light {
  width: 5px;
  border: solid #e8e8e8;
  border-width: 2px 1px;
  background: repeating-linear-gradient(90deg, #999 0 1px, #e8e8e8 1px 2px);
}
.combo {
  position: relative;
  display: flex;
  flex: none;
  align-items: center;
  box-sizing: border-box;
  border: 1px solid #fafafa;
  border-right-color: #777;
  border-bottom-color: #9b9b9b;
  background: linear-gradient(#f3f3f3, #dcdcdc);
}
.combo select {
  flex: 1;
  min-width: 0;
  height: 100%;
  appearance: none;
}
.combo > .tri {
  position: absolute;
  top: 6px;
  right: 3px;
  pointer-events: none;
}
.style-box { width: 94px; }
.app .in14 select { padding-left: 14px; }
.app .in4 select { padding-left: 3px; }
.ws-box { width: 137px; }
.app .ws-box select { padding-left: 6px; }
.layer-box { width: 234px; }
.layer-box .icon { width: 13px; }
.app .layer-box select { padding-left: 2px; }
.app .by select {
  font-family: "Liberation Serif", "Noto Sans CJK SC", serif;
  font-size: 9px;
  font-weight: 700;
  padding-left: 4px;
}
.color-box { width: 119px; }
.type-box { width: 125px; }
.weight-box { width: 98px; }
.plot-box { width: 93px; }
.view-box { width: 107px; }
.swatch {
  flex: none;
  width: 7px;
  height: 7px;
  margin-left: 3px;
  border: 1px solid #111;
  background: #fff;
}
.rule {
  flex: none;
  width: 47px;
  height: 1px;
  margin-left: 3px;
  background: #111;
}
.weight-box .rule { width: 27px; }
.combo.off {
  background: #f1f1f1;
  color: #777;
}
.off > .tri { border-top-color: #aaa; }
.app .plot-box select {
  padding-left: 6px;
  font-family: "Liberation Mono", monospace;
  font-size: 8px;
  font-weight: 400;
  opacity: 1;
}

/* work area */
.work {
  display: flex;
  flex: 1;
  min-height: 0;
  border-top: 1px solid #444;
}
.side {
  display: flex;
  flex: none;
  flex-direction: column;
  width: 18px;
}
.left {
  padding: 0 4px 0 0;
  border-left: 1px solid #333;
}
.right {
  padding: 0 3px 0 2px;
  border-left: 2px solid #505050;
}
.side-grip {
  flex: none;
  height: 6px;
  box-sizing: border-box;
  border: solid #505050;
  border-width: 1px 3px;
  background: repeating-linear-gradient(#3f3f3f 0 1px, #777 1px 2px);
}
.stack {
  display: flex;
  flex: none;
  flex-direction: column;
  background: #efefef;
  box-shadow: 0 1px 0 #444, 1px 0 0 #4d4d4d;
}
.app .stack .tool {
  flex: 1;
  height: auto;
  min-height: 0;
}
.draw-stack { height: 344px; }
.modify-stack { height: 310px; }
.order-stack { height: 108px; }
.hsep {
  height: 1px;
  margin: 2px;
  background: #aaa;
}
.viewport {
  position: relative;
  flex: 1;
  min-width: 0;
  overflow: hidden;
  border-left: 1px solid #a0a5a8;
  background: #222932;
}
.scene {
  display: block;
  width: 100%;
  height: 100%;
}
.axis {
  font-family: "Open Sans", sans-serif;
  font-size: 13px;
  font-weight: 300;
}
.app .view-label {
  position: absolute;
  top: 3px;
  left: 4px;
  color: #e2e5e8;
  font-size: 9px;
}
.navigator {
  position: absolute;
  top: 28px;
  right: 12px;
  display: flex;
  flex-direction: column;
  align-items: center;
  gap: 10px;
  width: 104px;
}
.cube {
  width: 104px;
  height: 92px;
}
.compass {
  fill: #a4a7aa;
  font-family: "Noto Sans CJK SC", sans-serif;
  font-size: 15px;
}
.far {
  font-size: 12px;
}
.face {
  fill: #3c3f42;
  font-family: "Noto Sans CJK SC", sans-serif;
  font-size: 14px;
}
.app .ucs {
  display: flex;
  align-items: center;
  justify-content: space-between;
  width: 45px;
  height: 13px;
  padding: 0 4px;
  border: 1px solid #c0c3cc;
  border-radius: 2px;
  background: #9c9fab;
  color: #5e616b;
  font-size: 8px;
}
.ucs svg {
  width: 6px;
  height: 6px;
}
.scroll {
  display: flex;
  flex: none;
  flex-direction: column;
  align-items: center;
  width: 12px;
  padding: 4px 0 1px;
  box-sizing: border-box;
  margin-right: 2px;
  background: #efefef;
  border-left: 1px solid #fff;
}
.thumb {
  width: 9px;
  height: 11px;
  margin-top: auto;
  margin-bottom: 4px;
  border: 1px solid #aaa;
  background: linear-gradient(90deg, #fff, #ccc);
}
</style>
